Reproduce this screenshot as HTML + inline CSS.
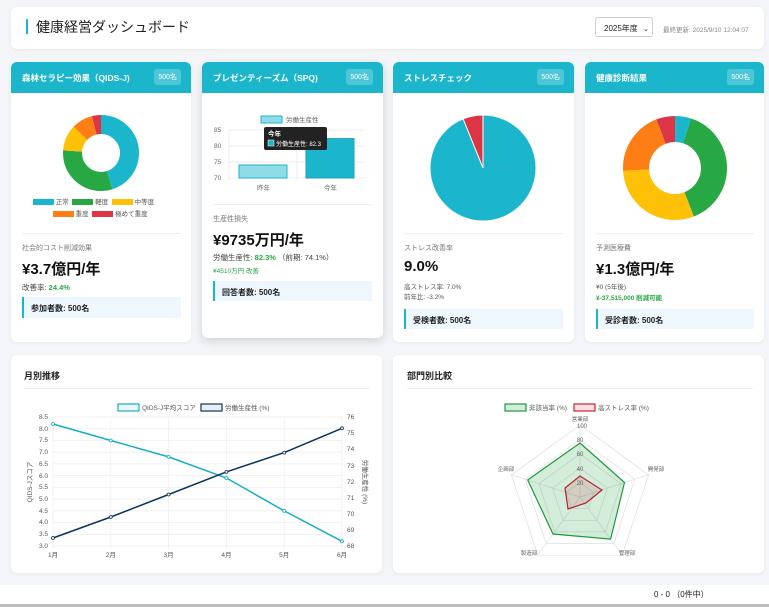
<!DOCTYPE html>
<html><head><meta charset="utf-8">
<style>
*{box-sizing:border-box;margin:0;padding:0}
body{width:769px;height:607px;overflow:hidden;background:#f3f5f8;font-family:"Liberation Sans","Noto Sans CJK JP",sans-serif;color:#222;position:relative}
.a{position:absolute}
.card{position:absolute;background:#fff;border-radius:6px;box-shadow:0 1px 4px rgba(0,0,0,.06)}
.hd{position:absolute;left:0;top:0;right:0;height:31px;background:#1cb6cc;border-radius:6px 6px 0 0;color:#fff;font-weight:bold;font-size:8.5px;padding:10px 0 0 11px}
.bdg{position:absolute;right:10px;top:7px;background:rgba(255,255,255,.22);border-radius:3px;font-size:7px;padding:3px 4px;font-weight:normal}
.lbl{font-size:7px;color:#777}
.big{font-size:15px;font-weight:bold;color:#111}
.box{position:absolute;background:#eef7fd;border-left:2px solid #1cb6cc;font-size:8px;font-weight:bold;padding:6px 0 0 7px;height:21px}
.dv{position:absolute;height:1px;background:#eee}
.sm{font-size:7.5px;color:#444}
.g{color:#28a745;font-weight:bold}
</style></head><body>
<div class="card" style="left:11px;top:7px;width:753px;height:42px"></div>
<div class="a" style="left:26px;top:19px;width:2px;height:15px;background:#1cb6cc"></div>
<div class="a" style="left:36px;top:17px;font-size:14px;color:#222">健康経営ダッシュボード</div>
<div class="a" style="left:595px;top:17px;width:58px;height:20px;border:1px solid #ccc;border-radius:3px;background:#fff;font-size:8px;padding:5px 0 0 8px">2025年度 <span style="font-size:7px;margin-left:3px">⌄</span></div>
<div class="a" style="left:663px;top:24px;font-size:6.5px;color:#888">最終更新: 2025/9/10 12:04:07</div>

<!-- cards -->
<div class="card" style="left:11px;top:62px;width:180px;height:280px"><div class="hd">森林セラピー効果（QIDS-J)<span class="bdg">500名</span></div></div>
<div class="card" style="left:202px;top:62px;width:181px;height:276px;box-shadow:0 3px 10px rgba(0,0,0,.15)"><div class="hd">プレゼンティーズム（SPQ)<span class="bdg">500名</span></div></div>
<div class="card" style="left:393px;top:62px;width:181px;height:280px"><div class="hd">ストレスチェック<span class="bdg">500名</span></div></div>
<div class="card" style="left:585px;top:62px;width:179px;height:280px"><div class="hd">健康診断結果<span class="bdg">500名</span></div></div>
<div class="card" style="left:11px;top:355px;width:371px;height:218px"></div>
<div class="card" style="left:393px;top:355px;width:371px;height:218px"></div>

<svg class="a" style="left:0;top:0" width="769" height="607">
<g transform="rotate(-90 101 153)" fill="none" stroke-width="19">
<circle cx="101" cy="153" r="28.5" stroke="#1cb6cc" stroke-dasharray="80.6 179.1"/>
<circle cx="101" cy="153" r="28.5" stroke="#28a745" stroke-dasharray="0 80.6 55.5 179.1"/>
<circle cx="101" cy="153" r="28.5" stroke="#ffc107" stroke-dasharray="0 136.1 19.7 179.1"/>
<circle cx="101" cy="153" r="28.5" stroke="#fd7e14" stroke-dasharray="0 155.8 16.1 179.1"/>
<circle cx="101" cy="153" r="28.5" stroke="#dc3545" stroke-dasharray="0 171.9 7.2 179.1"/>
</g>
<g transform="rotate(-90 675 168)" fill="none" stroke-width="26">
<circle cx="675" cy="168" r="39" stroke="#1cb6cc" stroke-dasharray="12.3 245"/>
<circle cx="675" cy="168" r="39" stroke="#28a745" stroke-dasharray="0 12.3 95.6 245"/>
<circle cx="675" cy="168" r="39" stroke="#ffc107" stroke-dasharray="0 107.9 73.5 245"/>
<circle cx="675" cy="168" r="39" stroke="#fd7e14" stroke-dasharray="0 181.4 49 245"/>
<circle cx="675" cy="168" r="39" stroke="#dc3545" stroke-dasharray="0 230.4 14.6 245"/>
</g>
<circle cx="483" cy="168" r="53" fill="#1cb6cc" stroke="#fff" stroke-width="1"/>
<path d="M483,168 L483,115 A53,53 0 0 0 463.1,118.9 Z" fill="#dc3545" stroke="#fff" stroke-width="1"/>
</svg>

<div class="a" style="left:33px;top:197px;font-size:6.5px;color:#555;line-height:12px;width:140px">
<span style="display:inline-block;width:21px;height:6px;background:#1cb6cc;vertical-align:middle"></span> 正常 &nbsp;<span style="display:inline-block;width:21px;height:6px;background:#28a745;vertical-align:middle"></span> 軽度 &nbsp;<span style="display:inline-block;width:21px;height:6px;background:#ffc107;vertical-align:middle"></span> 中等度<br>
&nbsp;&nbsp;&nbsp;&nbsp;&nbsp;&nbsp;&nbsp;&nbsp;&nbsp;&nbsp;&nbsp;<span style="display:inline-block;width:21px;height:6px;background:#fd7e14;vertical-align:middle"></span> 重度 &nbsp;<span style="display:inline-block;width:21px;height:6px;background:#dc3545;vertical-align:middle"></span> 極めて重度</div>
<div class="dv" style="left:22px;top:233px;width:159px"></div>
<div class="a lbl" style="left:22px;top:243px">社会的コスト削減効果</div>
<div class="a big" style="left:22px;top:258px">¥3.7億円/年</div>
<div class="a sm" style="left:22px;top:282px">改善率: <span class="g">24.4%</span></div>
<div class="box" style="left:22px;top:297px;width:159px">参加者数: 500名</div>

<svg class="a" style="left:0;top:0" width="769" height="607" font-size="6.5" fill="#666">
<rect x="261" y="116" width="21" height="7" fill="#8fdce6" stroke="#1cb6cc"/>
<text x="286" y="122">労働生産性</text>
<g stroke="#eee"><line x1="229" y1="130" x2="365" y2="130"/><line x1="229" y1="146" x2="365" y2="146"/><line x1="229" y1="162" x2="365" y2="162"/><line x1="229" y1="178" x2="365" y2="178"/><line x1="229" y1="130" x2="229" y2="181"/><line x1="297" y1="130" x2="297" y2="181"/></g>
<text x="214" y="132">85</text><text x="214" y="148">80</text><text x="214" y="164">75</text><text x="214" y="180">70</text>
<rect x="239" y="165" width="48" height="13" fill="#8fdce6" stroke="#1cb6cc"/>
<rect x="306" y="138.6" width="48" height="39.4" fill="#1cb6cc" stroke="#17a2b8"/>
<text x="257" y="190">昨年</text><text x="324" y="190">今年</text>
<rect x="264" y="127" width="63" height="23" rx="2" fill="#222"/>
<text x="268" y="136" fill="#fff" font-weight="bold">今年</text>
<rect x="268" y="140" width="6" height="6" fill="#1cb6cc" stroke="#fff" stroke-width=".5"/>
<text x="276" y="146" fill="#fff" font-size="6">労働生産性: 82.3</text>
</svg>
<div class="dv" style="left:213px;top:204px;width:159px"></div>
<div class="a lbl" style="left:213px;top:214px">生産性損失</div>
<div class="a big" style="left:213px;top:229px">¥9735万円/年</div>
<div class="a sm" style="left:213px;top:252px">労働生産性: <span class="g">82.3%</span> （前期: 74.1%）</div>
<div class="a" style="left:213px;top:265px;font-size:6.5px"><span class="g" style="font-weight:normal">¥4510万円 改善</span></div>
<div class="box" style="left:213px;top:281px;width:159px;height:20px">回答者数: 500名</div>

<div class="dv" style="left:404px;top:233px;width:159px"></div>
<div class="a lbl" style="left:404px;top:243px">ストレス改善率</div>
<div class="a big" style="left:404px;top:258px">9.0%</div>
<div class="a" style="left:404px;top:283px;font-size:6.5px;color:#555;line-height:10px">高ストレス率: 7.0%<br>前年比: -3.2%</div>
<div class="box" style="left:404px;top:309px;width:159px;height:20px">受検者数: 500名</div>

<div class="dv" style="left:596px;top:233px;width:158px"></div>
<div class="a lbl" style="left:596px;top:243px">予測医療費</div>
<div class="a big" style="left:596px;top:258px">¥1.3億円/年</div>
<div class="a" style="left:596px;top:281px;font-size:6.5px;color:#555">¥0 (5年後)</div>
<div class="a" style="left:596px;top:292px;font-size:6.5px;color:#28a745;font-weight:bold">¥-37,515,000 削減可能</div>
<div class="box" style="left:596px;top:309px;width:158px;height:20px">受診者数: 500名</div>

<div class="a" style="left:24px;top:369px;font-size:9px;font-weight:bold">月別推移</div>
<div class="dv" style="left:24px;top:388px;width:346px"></div>
<div class="a" style="left:407px;top:369px;font-size:9px;font-weight:bold">部門別比較</div>
<div class="dv" style="left:407px;top:388px;width:346px"></div>

<svg class="a" style="left:0;top:0" width="769" height="607" font-size="6.5" fill="#555">
<rect x="118" y="404" width="21" height="7" fill="#e8f8fa" stroke="#17aec5" stroke-width="1.2"/><text x="142" y="410">QIDS-J平均スコア</text>
<rect x="201" y="404" width="21" height="7" fill="#e8eef4" stroke="#0d3357" stroke-width="1.2"/><text x="225" y="410">労働生産性 (%)</text>
<g stroke="#eee" stroke-width=".8">
<line x1="53" y1="417" x2="342" y2="417"/><line x1="53" y1="428.7" x2="342" y2="428.7"/><line x1="53" y1="440.5" x2="342" y2="440.5"/><line x1="53" y1="452.2" x2="342" y2="452.2"/><line x1="53" y1="463.9" x2="342" y2="463.9"/><line x1="53" y1="475.6" x2="342" y2="475.6"/><line x1="53" y1="487.4" x2="342" y2="487.4"/><line x1="53" y1="499.1" x2="342" y2="499.1"/><line x1="53" y1="510.8" x2="342" y2="510.8"/><line x1="53" y1="522.5" x2="342" y2="522.5"/><line x1="53" y1="534.3" x2="342" y2="534.3"/><line x1="53" y1="546" x2="342" y2="546"/>
<line x1="53" y1="417" x2="53" y2="549"/><line x1="110.8" y1="417" x2="110.8" y2="549"/><line x1="168.6" y1="417" x2="168.6" y2="549"/><line x1="226.4" y1="417" x2="226.4" y2="549"/><line x1="284.2" y1="417" x2="284.2" y2="549"/><line x1="342" y1="417" x2="342" y2="549"/>
</g>
<g text-anchor="end"><text x="48" y="419">8.5</text><text x="48" y="431">8.0</text><text x="48" y="442">7.5</text><text x="48" y="454">7.0</text><text x="48" y="466">6.5</text><text x="48" y="478">6.0</text><text x="48" y="489">5.5</text><text x="48" y="501">5.0</text><text x="48" y="513">4.5</text><text x="48" y="524">4.0</text><text x="48" y="536">3.5</text><text x="48" y="548">3.0</text></g>
<g><text x="347" y="419">76</text><text x="347" y="435">75</text><text x="347" y="451">74</text><text x="347" y="468">73</text><text x="347" y="484">72</text><text x="347" y="500">71</text><text x="347" y="516">70</text><text x="347" y="532">69</text><text x="347" y="548">68</text></g>
<text transform="translate(32,482) rotate(-90)" text-anchor="middle">QIDS-Jスコア</text>
<text transform="translate(363,482) rotate(90)" text-anchor="middle">労働生産性 (%)</text>
<g text-anchor="middle"><text x="53" y="557">1月</text><text x="110.8" y="557">2月</text><text x="168.6" y="557">3月</text><text x="226.4" y="557">4月</text><text x="284.2" y="557">5月</text><text x="342" y="557">6月</text></g>
<polyline points="53,424 110.8,440.5 168.6,456.9 226.4,478 284.2,510.9 342,541.3" fill="none" stroke="#17aec5" stroke-width="1.5"/>
<polyline points="53,538 110.8,517 168.6,494.5 226.4,471.9 284.2,452.6 342,428.3" fill="none" stroke="#0d3357" stroke-width="1.5"/>
<g fill="#e8f8fa" stroke="#17aec5" stroke-width=".8"><circle cx="53" cy="424" r="1.5"/><circle cx="110.8" cy="440.5" r="1.5"/><circle cx="168.6" cy="456.9" r="1.5"/><circle cx="226.4" cy="478" r="1.5"/><circle cx="284.2" cy="510.9" r="1.5"/><circle cx="342" cy="541.3" r="1.5"/></g>
<g fill="#e8eef4" stroke="#0d3357" stroke-width=".8"><circle cx="53" cy="538" r="1.5"/><circle cx="110.8" cy="517" r="1.5"/><circle cx="168.6" cy="494.5" r="1.5"/><circle cx="226.4" cy="471.9" r="1.5"/><circle cx="284.2" cy="452.6" r="1.5"/><circle cx="342" cy="428.3" r="1.5"/></g>

<rect x="505" y="404" width="21" height="7" fill="#d4edda" stroke="#1e9a3a" stroke-width="1.2"/><text x="529" y="410">非該当率 (%)</text>
<rect x="574" y="404" width="21" height="7" fill="#fbe0e3" stroke="#c82333" stroke-width="1.2"/><text x="598" y="410">高ストレス率 (%)</text>
<g fill="none" stroke="#ddd" stroke-width=".7">
<polygon points="580,425 648.5,474.8 622.3,555.2 537.7,555.2 511.5,474.8"/>
<polygon points="580,439.4 634.8,479.2 613.9,543.6 546.1,543.6 525.2,479.2"/>
<polygon points="580,453.8 621.1,483.7 605.4,531.9 554.6,531.9 538.9,483.7"/>
<polygon points="580,468.2 607.4,488.1 596.9,520.3 563.1,520.3 552.6,488.1"/>
<polygon points="580,482.6 593.7,492.5 588.5,508.6 571.5,508.6 566.3,492.5"/>
<line x1="580" y1="497" x2="580" y2="425"/><line x1="580" y1="497" x2="648.5" y2="474.8"/><line x1="580" y1="497" x2="622.3" y2="555.2"/><line x1="580" y1="497" x2="537.7" y2="555.2"/><line x1="580" y1="497" x2="511.5" y2="474.8"/>
</g>
<polygon points="580,443 624.5,482.5 610.6,539.1 553,534 527.7,480" fill="rgba(40,167,69,.2)" stroke="#1e9a3a" stroke-width="1.2"/>
<polygon points="580,476 602,490 586,503 568,509 565,488" fill="rgba(200,35,51,.15)" stroke="#b5232f" stroke-width="1.2"/>
<g font-size="5.5" fill="#666" text-anchor="middle"><text x="580" y="421">営業部</text><text x="656" y="471">開発部</text><text x="627" y="555">管理部</text><text x="529" y="555">製造部</text><text x="506" y="471">企画部</text></g>
<g font-size="6" fill="#666" text-anchor="middle"><text x="582" y="428">100</text><text x="580" y="442">80</text><text x="580" y="456">60</text><text x="580" y="471">40</text><text x="580" y="485">20</text></g>
</svg>

<div class="a" style="left:0;top:585px;width:769px;height:19px;background:#fff"></div>
<div class="a" style="left:0;top:604px;width:769px;height:3px;background:#bbb"></div>
<div class="a" style="left:654px;top:589px;font-size:8px;color:#222">0 - 0 （0件中）</div>
</body></html>
